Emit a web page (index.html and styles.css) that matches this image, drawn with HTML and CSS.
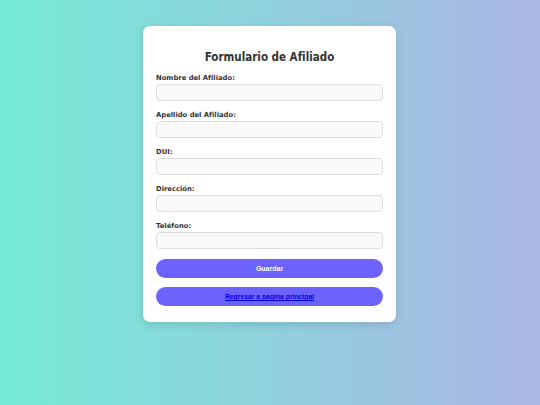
FILE: index.html
```html
<!DOCTYPE html>
<html lang="es">
<head>
<meta charset="utf-8">
<title>Formulario de Afiliado</title>
<link rel="stylesheet" href="styles.css">
</head>
<body>
<div class="card">
  <h2 class="title">Formulario de Afiliado</h2>
  <form class="form">
    <div class="group">
      <label class="label">Nombre del Afiliado:</label>
      <input class="input" type="text">
    </div>
    <div class="group">
      <label class="label">Apellido del Afiliado:</label>
      <input class="input" type="text">
    </div>
    <div class="group">
      <label class="label">DUI:</label>
      <input class="input" type="text">
    </div>
    <div class="group">
      <label class="label">Dirección:</label>
      <input class="input" type="text">
    </div>
    <div class="group">
      <label class="label">Teléfono:</label>
      <input class="input" type="text">
    </div>
    <button class="btn" type="button">Guardar</button>
    <div class="btn btn-link"><a href="#" class="link">Regresar a pagina principal</a></div>
  </form>
</div>
</body>
</html>
```
FILE: styles.css
```css
html, body {
  margin: 0;
  padding: 0;
}
html {
  background: linear-gradient(to right, #74ebd5, #acb6e5);
  min-height: 405px;
}
body {
  width: 539px;
  height: 405px;
  font-family: "DejaVu Sans", sans-serif;
  display: flex;
  justify-content: center;
  align-items: flex-start;
}
.card {
  margin-top: 26px;
  width: 253px;
  box-sizing: border-box;
  background: #fff;
  border-radius: 7px;
  padding: 24px 13px 16px;
  box-shadow: 0 3px 10px rgba(0, 0, 0, 0.12);
}
.title {
  margin: 0 0 8px;
  font-family: "DejaVu Sans Condensed", "DejaVu Sans", sans-serif;
  font-stretch: condensed;
  font-size: 11.5px;
  line-height: 14px;
  text-align: center;
  color: #333;
  font-weight: bold;
}
.form {
  display: flex;
  flex-direction: column;
}
.group {
  display: flex;
  flex-direction: column;
  margin-bottom: 8px;
}
.label {
  font-size: 6.8px;
  line-height: 9px;
  font-weight: bold;
  color: #333;
  padding-top: 1.5px;
  margin-bottom: 1.5px;
}
.input {
  height: 17px;
  box-sizing: border-box;
  border: 1px solid #ddd;
  border-radius: 4px;
  background: #f9f9f9;
  margin: 0;
  padding: 0 5px;
}
.btn {
  height: 19px;
  margin-top: 2px;
  border: none;
  border-radius: 10px;
  background: #6c63ff;
  color: #fff;
  font-family: "Liberation Sans", Arial, sans-serif;
  font-weight: bold;
  font-size: 7px;
  display: flex;
  align-items: center;
  justify-content: center;
  padding: 0;
}
.btn-link {
  margin-top: 9px;
  font-size: 6.8px;
}
.link {
  color: #0000ee;
  text-decoration: underline;
}
```
